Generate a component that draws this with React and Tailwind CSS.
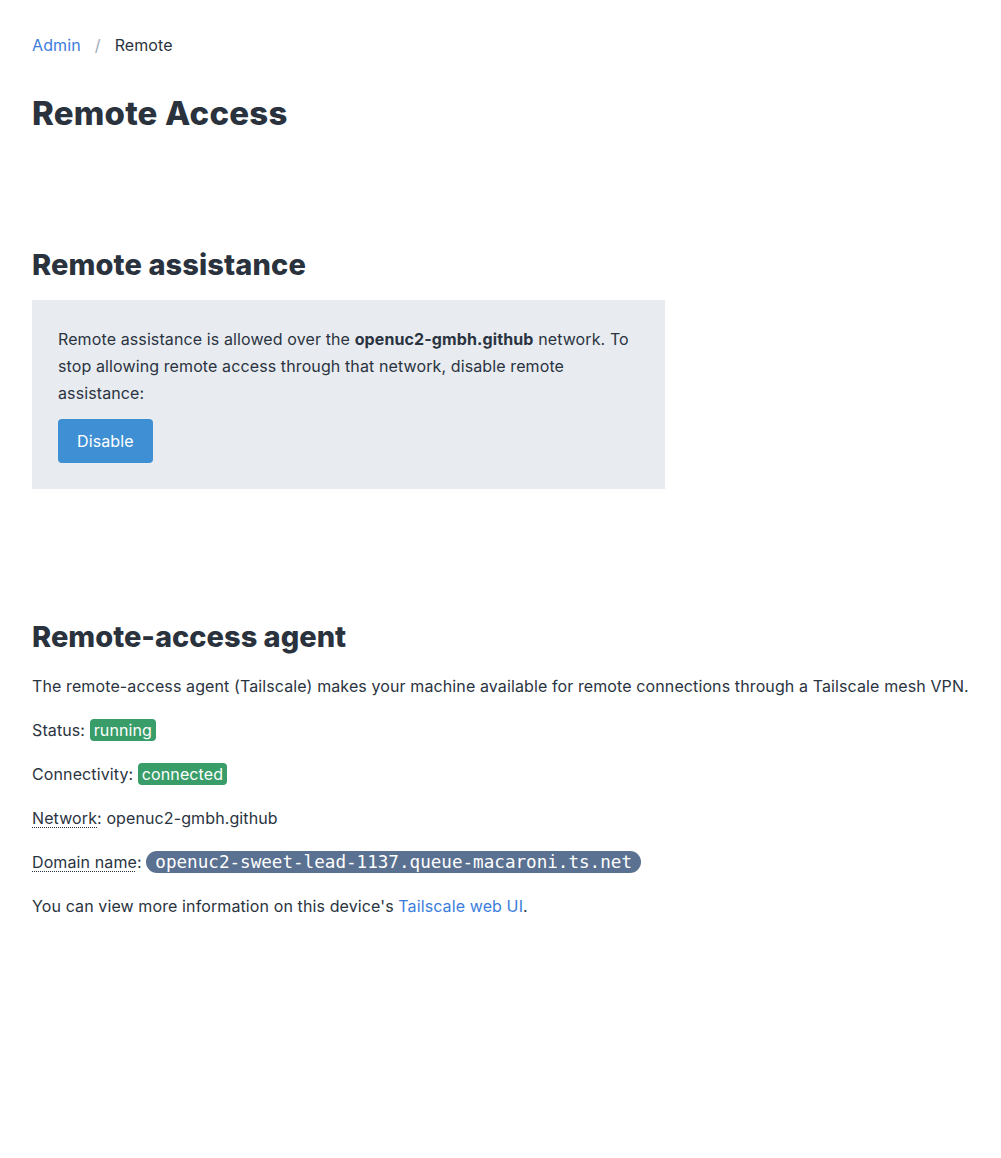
import React from "react";

function Badge({ children }) {
  return (
    <span className="rounded-[4px] bg-[#389d68] px-[4px] py-[1px] text-white">
      {children}
    </span>
  );
}

function Abbr({ children }) {
  return (
    <span className="underline decoration-dotted decoration-[1px] underline-offset-[3px]">
      {children}
    </span>
  );
}

export default function App() {
  return (
    <div className="min-h-[1158px] bg-white px-[32px] pt-[33px] font-['Inter',sans-serif] text-[16px] leading-[24px] tracking-[0.11px] text-[#2a3441]">
      {/* Breadcrumb */}
      <nav className="flex items-center">
        <a href="#" className="text-[#3b7ddd]">Admin</a>
        <span className="mx-[14px] text-[#a0aab8]">/</span>
        <span>Remote</span>
      </nav>

      <h1 className="mt-[36px] text-[33px] leading-[40px] font-extrabold tracking-[0.2px] text-[#29323d]">
        Remote Access
      </h1>

      {/* Remote assistance */}
      <section className="mt-[115px]">
        <h2 className="text-[29px] leading-[34px] font-extrabold tracking-[0.1px] text-[#29323d]">
          Remote assistance
        </h2>
        <div className="mt-[18px] w-[633px] bg-[#e8ebf0] px-[26px] py-[26px]">
          <p className="leading-[27px]">
            Remote assistance is allowed over the{" "}
            <strong className="font-bold">openuc2-gmbh.github</strong> network.
            To stop allowing remote access through that network, disable remote
            assistance:
          </p>
          <button className="mt-[12px] h-[44px] rounded-[4px] bg-[#3f8fd4] px-[19px] text-white">
            Disable
          </button>
        </div>
      </section>

      {/* Remote-access agent */}
      <section className="mt-[131px]">
        <h2 className="text-[29px] leading-[34px] font-extrabold tracking-[0px] text-[#29323d]">
          Remote-access agent
        </h2>
        <div className="mt-[20px] flex flex-col gap-[20px]">
          <p className="whitespace-nowrap">
            The remote-access agent (Tailscale) makes your machine available for
            remote connections through a Tailscale mesh VPN.
          </p>
          <p>
            Status: <Badge>running</Badge>
          </p>
          <p>
            Connectivity: <Badge>connected</Badge>
          </p>
          <p>
            <Abbr>Network</Abbr>: openuc2-gmbh.github
          </p>
          <p>
            <Abbr>Domain name</Abbr>:{" "}
            <span className="rounded-full bg-[#5a7191] px-[9px] py-[1px] font-['DejaVu_Sans_Mono',monospace] text-[17.6px] leading-[22px] tracking-normal text-white">
              openuc2-sweet-lead-1137.queue-macaroni.ts.net
            </span>
          </p>
          <p>
            You can view more information on this device's{" "}
            <a href="#" className="text-[#3b7ddd]">Tailscale web UI</a>.
          </p>
        </div>
      </section>
    </div>
  );
}
